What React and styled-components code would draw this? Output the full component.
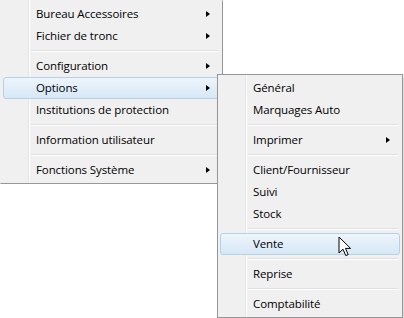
import React from "react";
import styled, { createGlobalStyle, css } from "styled-components";

const Global = createGlobalStyle`
  html, body { margin: 0; padding: 0; background: #ffffff; }
  body { font-family: "Open Sans", "Noto Sans", sans-serif; }
`;

const Stage = styled.div`
  width: 404px;
  height: 318px;
  overflow: hidden;
  background: #ffffff;
`;

const Menu = styled.div`
  width: ${(p) => p.$width}px;
  box-sizing: border-box;
  display: flex;
  flex-direction: column;
  padding: 2px;
  border: 1px solid #979797;
  ${(p) =>
    p.$clipped &&
    css`
      border-top-color: transparent;
      border-left-color: transparent;
    `}
  background:
    linear-gradient(
      to right,
      transparent 27px,
      #e2e3e3 27px,
      #e2e3e3 28px,
      #ffffff 28px,
      #ffffff 29px,
      transparent 29px
    ),
    #f0f0f0;
  background-origin: padding-box;
  background-clip: border-box;
  box-shadow: ${(p) => (p.$clipped ? "none" : "2px 2px 3px rgba(0, 0, 0, 0.16)")};
  font-family: "Open Sans", "Noto Sans", sans-serif;
  font-size: 11.5px;
  color: #000000;
`;

const SubMenu = styled(Menu)`
  position: absolute;
  z-index: 2;
  left: calc(100% - 2px);
  top: -4px;
`;

const Row = styled.div`
  position: ${(p) => (p.$anchor ? "relative" : "static")};
  height: 22px;
  box-sizing: border-box;
  display: flex;
  align-items: center;
  padding: 0 9px 1px 32px;
  border: 1px solid transparent;
  border-radius: 3px;
  white-space: nowrap;
  ${(p) =>
    p.$active &&
    css`
      border-color: #b3d2ea;
      background: linear-gradient(to bottom, #eef5fc 0%, #e2eef9 50%, #d7e8f7 100%);
    `}
`;

const Label = styled.span`
  flex: 1;
  letter-spacing: -0.1px;
`;

const Arrow = styled.span`
  width: 0;
  height: 0;
  border-top: 3.5px solid transparent;
  border-bottom: 3.5px solid transparent;
  border-left: 4px solid #000000;
`;

const Separator = styled.div`
  height: 8px;
  display: flex;
  flex-direction: column;
  justify-content: center;
  padding: 0 2px 0 28px;
  &::before {
    content: "";
    height: 1px;
    background: #e0e0e0;
  }
  &::after {
    content: "";
    height: 1px;
    background: #ffffff;
  }
`;

const Cursor = styled.svg`
  position: absolute;
  left: 117px;
  top: 2px;
`;

function Pointer() {
  return (
    <Cursor width="14" height="22" viewBox="0 0 14 22">
      <path
        d="M1 1 L1 17 L5 13.2 L7.8 19.6 L10.2 18.6 L7.5 12.4 L12.6 12.4 Z"
        fill="#ffffff"
        stroke="#000000"
        strokeWidth="1"
        strokeLinejoin="round"
      />
    </Cursor>
  );
}

const subMenu = [
  { label: "Général" },
  { label: "Marquages Auto" },
  "sep",
  { label: "Imprimer", sub: true },
  "sep",
  { label: "Client/Fournisseur" },
  { label: "Suivi" },
  { label: "Stock" },
  "sep",
  { label: "Vente", active: true, pointer: true },
  "sep",
  { label: "Reprise" },
  "sep",
  { label: "Comptabilité" },
];

const mainMenu = [
  { label: "Bureau Accessoires", sub: true },
  { label: "Fichier de tronc", sub: true },
  "sep",
  { label: "Configuration", sub: true },
  { label: "Options", sub: true, active: true, children: subMenu },
  { label: "Institutions de protection" },
  "sep",
  { label: "Information utilisateur" },
  "sep",
  { label: "Fonctions Système", sub: true },
];

function Item({ label, sub, active, pointer, children }) {
  return (
    <Row $active={active} $anchor={!!children || pointer}>
      <Label>{label}</Label>
      {sub && <Arrow />}
      {pointer && <Pointer />}
      {children && <SubMenu $width={186}>{renderItems(children)}</SubMenu>}
    </Row>
  );
}

function renderItems(items) {
  return items.map((it, i) =>
    it === "sep" ? <Separator key={i} /> : <Item key={i} {...it} />
  );
}

export default function App() {
  return (
    <>
      <Global />
      <Stage>
        <Menu $width={223} $clipped>
          {renderItems(mainMenu)}
        </Menu>
      </Stage>
    </>
  );
}
